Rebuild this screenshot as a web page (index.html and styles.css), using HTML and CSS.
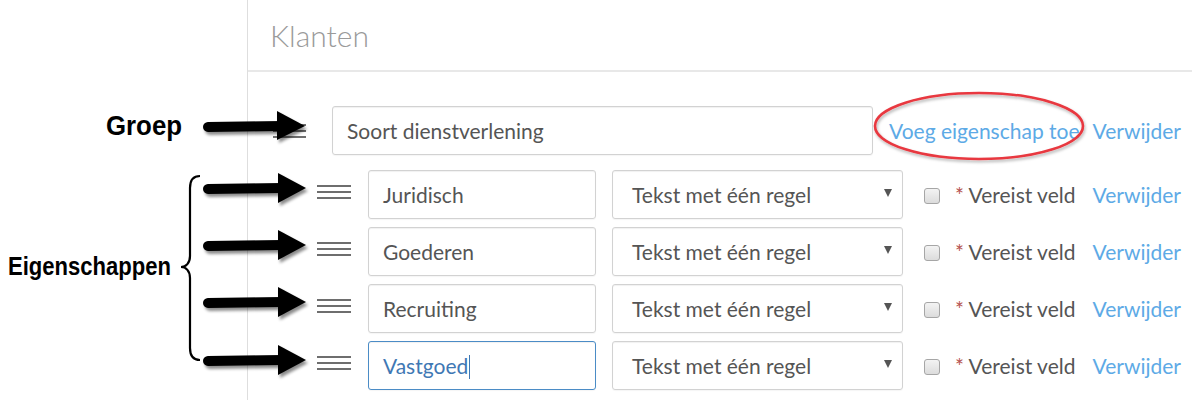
FILE: index.html
```html
<!DOCTYPE html>
<html lang="nl">
<head>
<meta charset="utf-8">
<title>Klanten</title>
<link rel="stylesheet" href="styles.css">
</head>
<body>
<div class="page">
  <div class="gutter"></div>
  <section class="panel">
    <header class="panel-head"><h1>Klanten</h1></header>
    <div class="panel-body">
      <div class="group-row">
        <span class="handle"></span>
        <div class="field group-field">Soort dienstverlening</div>
        <a class="link add">Voeg eigenschap toe</a>
        <a class="link remove">Verwijder</a>
      </div>
      <div class="props">
        <div class="prop-row">
          <span class="handle"></span>
          <div class="field prop-field">Juridisch</div>
          <div class="select"><span>Tekst met één regel</span><span class="caret"></span></div>
          <span class="check"></span>
          <span class="req"><span class="star">*</span> Vereist veld</span>
          <a class="link remove">Verwijder</a>
        </div>
        <div class="prop-row">
          <span class="handle"></span>
          <div class="field prop-field">Goederen</div>
          <div class="select"><span>Tekst met één regel</span><span class="caret"></span></div>
          <span class="check"></span>
          <span class="req"><span class="star">*</span> Vereist veld</span>
          <a class="link remove">Verwijder</a>
        </div>
        <div class="prop-row">
          <span class="handle"></span>
          <div class="field prop-field">Recruiting</div>
          <div class="select"><span>Tekst met één regel</span><span class="caret"></span></div>
          <span class="check"></span>
          <span class="req"><span class="star">*</span> Vereist veld</span>
          <a class="link remove">Verwijder</a>
        </div>
        <div class="prop-row">
          <span class="handle"></span>
          <div class="field prop-field focused">Vastgoed<span class="cursor"></span></div>
          <div class="select"><span>Tekst met één regel</span><span class="caret"></span></div>
          <span class="check"></span>
          <span class="req"><span class="star">*</span> Vereist veld</span>
          <a class="link remove">Verwijder</a>
        </div>
      </div>
    </div>
  </section>

  <svg class="annot" width="1192" height="400" viewBox="0 0 1192 400" xmlns="http://www.w3.org/2000/svg">
    <defs>
      <filter id="sh" x="-20%" y="-60%" width="140%" height="220%">
        <feDropShadow dx="2" dy="3" stdDeviation="1.6" flood-color="#000" flood-opacity="0.45"/>
      </filter>
      <filter id="sh2" x="-10%" y="-30%" width="120%" height="160%">
        <feDropShadow dx="1" dy="2" stdDeviation="1.5" flood-color="#000" flood-opacity="0.3"/>
      </filter>
    </defs>
    <text class="lbl" x="106" y="135" font-size="27" textLength="76" lengthAdjust="spacingAndGlyphs">Groep</text>
    <text class="lbl" x="8" y="275" font-size="25" textLength="163" lengthAdjust="spacingAndGlyphs">Eigenschappen</text>

    <g filter="url(#sh)" fill="#000">
      <line x1="208" y1="127" x2="282" y2="126" stroke="#000" stroke-width="10" stroke-linecap="round"/>
      <polygon points="277,111 305,126 277,140"/>
    </g>
    <g filter="url(#sh)" fill="#000">
      <line x1="208" y1="189" x2="282" y2="188" stroke="#000" stroke-width="10" stroke-linecap="round"/>
      <polygon points="278,173 306,188 278,203"/>
    </g>
    <g filter="url(#sh)" fill="#000">
      <line x1="208" y1="246" x2="282" y2="245" stroke="#000" stroke-width="10" stroke-linecap="round"/>
      <polygon points="278,230 306,245 278,260"/>
    </g>
    <g filter="url(#sh)" fill="#000">
      <line x1="208" y1="303" x2="282" y2="302" stroke="#000" stroke-width="10" stroke-linecap="round"/>
      <polygon points="278,287 306,302 278,317"/>
    </g>
    <g filter="url(#sh)" fill="#000">
      <line x1="208" y1="361" x2="282" y2="360" stroke="#000" stroke-width="10" stroke-linecap="round"/>
      <polygon points="278,345 306,360 278,375"/>
    </g>

    <path d="M200,176 C193,176 190,180 190,188 L190,256 C190,263 186,267 181,267 C186,267 190,271 190,278 L190,348 C190,356 193,360 200,360" fill="none" stroke="#000" stroke-width="2.2"/>

    <ellipse cx="979" cy="126" rx="104" ry="33" fill="none" stroke="#e8383f" stroke-width="2.6" filter="url(#sh2)"/>
  </svg>
</div>
</body>
</html>
```

FILE: styles.css
```css
html, body {
  margin: 0;
  padding: 0;
  background: #fff;
}

body {
  font-family: Lato, "Open Sans", "Liberation Sans", sans-serif;
  color: #555;
}

.page {
  position: relative;
  display: flex;
  width: 1192px;
  height: 400px;
  overflow: hidden;
}

.gutter {
  flex: none;
  width: 247px;
}

.panel {
  flex: 1;
  border-left: 1px solid #dedede;
}

.panel-head {
  box-sizing: border-box;
  height: 72px;
  padding: 17px 0 0 22px;
  border-bottom: 2px solid #e8e8e8;
}

.panel-head h1 {
  margin: 0;
  font-weight: 300;
  font-size: 30px;
  line-height: 36px;
  color: #9a9a9a;
}

.panel-body {
  padding: 34px 11px 0 25px;
}

.group-row,
.prop-row {
  display: flex;
  align-items: center;
  height: 49px;
}

.props {
  display: flex;
  flex-direction: column;
  gap: 8px;
  margin-top: 15px;
}

.handle {
  flex: none;
  width: 34px;
  height: 14px;
  background: linear-gradient(#6e6e6e 0 2px, transparent 2px 6px, #6e6e6e 6px 8px, transparent 8px 12px, #6e6e6e 12px 14px);
}

.group-row .handle {
  width: 33px;
  margin-right: 26px;
}

.prop-row .handle {
  margin-left: 44px;
  margin-right: 17px;
  margin-bottom: 5px;
}

.field,
.select {
  box-sizing: border-box;
  flex: none;
  height: 49px;
  border: 1px solid #d2d2d2;
  border-radius: 3px;
  box-shadow: inset 0 1px 1px rgba(0, 0, 0, 0.06), 0 1px 1px rgba(0, 0, 0, 0.04);
  font-size: 21px;
  line-height: 47px;
  color: #555;
  white-space: nowrap;
}

.field {
  padding-left: 14px;
}

.group-field {
  width: 541px;
}

.prop-field {
  width: 228px;
}

.focused {
  border-color: #4b8cc6;
  color: #3f78b4;
}

.cursor {
  display: inline-block;
  width: 1px;
  height: 24px;
  margin-left: 1px;
  vertical-align: -5px;
  background: #3f78b4;
}

.select {
  display: flex;
  align-items: center;
  justify-content: space-between;
  width: 291px;
  margin-left: 16px;
  padding: 0 10px 0 19px;
}

.caret {
  width: 0;
  height: 0;
  border-left: 4px solid transparent;
  border-right: 4px solid transparent;
  border-top: 8px solid #555;
  margin-bottom: 4px;
}

.check {
  flex: none;
  box-sizing: border-box;
  width: 16px;
  height: 16px;
  margin-left: 21px;
  margin-top: 3px;
  border: 1px solid #a6a6a6;
  border-radius: 3px;
  background: linear-gradient(#f3f3f3, #dcdcdc);
}

.req {
  margin-left: 15px;
  font-size: 21px;
  color: #555;
  white-space: nowrap;
}

.star {
  color: #b5534e;
}

.link {
  font-size: 21px;
  color: #5daae6;
  text-decoration: none;
  white-space: nowrap;
}

.add {
  margin-left: 16px;
}

.remove {
  margin-left: auto;
}

.annot {
  position: absolute;
  left: 0;
  top: 0;
  pointer-events: none;
}

.lbl {
  font-family: "Liberation Sans", Arial, sans-serif;
  font-weight: 700;
  fill: #000;
}
```
